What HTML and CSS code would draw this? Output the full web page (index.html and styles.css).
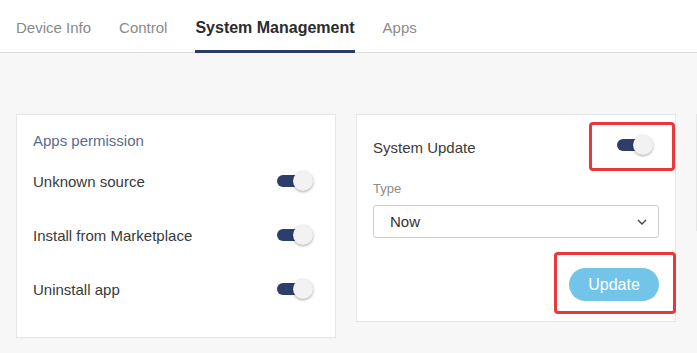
FILE: index.html
```html
<!DOCTYPE html>
<html lang="en">
<head>
    <meta charset="UTF-8">
    <meta name="viewport" content="width=device-width, initial-scale=1.0">
    <title>System Management</title>
    <link rel="stylesheet" href="styles.css">
</head>
<body>
    <!-- tabs -->
    <div class="tabs">
        <div class="tab">Device Info</div>
        <div class="tab">Control</div>
        <div class="tab active">System Management</div>
        <div class="tab">Apps</div>
    </div>

    <div class="main">
        <!-- apps permission -->
        <div class="card card-perm">
            <div class="card-title">Apps permission</div>
            <div class="row">
                <span>Unknown source</span>
                <div class="switch on"><span class="track"></span><span class="knob"></span></div>
            </div>
            <div class="row">
                <span>Install from Marketplace</span>
                <div class="switch on"><span class="track"></span><span class="knob"></span></div>
            </div>
            <div class="row">
                <span>Uninstall app</span>
                <div class="switch on"><span class="track"></span><span class="knob"></span></div>
            </div>
        </div>

        <!-- system update -->
        <div class="card card-update">
            <div class="update-head">
                <span>System Update</span>
                <div class="switch on switch-update"><span class="track"></span><span class="knob"></span></div>
            </div>
            <div class="field-label">Type</div>
            <div class="select">
                <span>Now</span>
                <svg class="chevron" viewBox="0 0 10 6" width="10" height="6">
                    <path d="M1 1l4 4 4-4" fill="none" stroke="#444" stroke-width="1.4"/>
                </svg>
            </div>
            <button class="btn-update">Update</button>

            <!-- annotations -->
            <div class="mark mark-switch"></div>
            <div class="mark mark-button"></div>
        </div>

        <div class="card card-next"></div>
    </div>
</body>
</html>
```

FILE: styles.css
```css
body {
    margin: 0;
    overflow: hidden;
    background: #f7f7f7;
    font-family: "Liberation Sans", Arial, sans-serif;
    color: #3a3a3a;
}

.tabs {
    display: flex;
    gap: 28px;
    height: 52px;
    padding-left: 16px;
    background: #fff;
    border-bottom: 1px solid #dcdcdc;
}

.tab {
    box-sizing: border-box;
    height: 53px;
    margin-bottom: -1px;
    padding-top: 19px;
    font-size: 15px;
    line-height: 18px;
    color: #8a8a8a;
    border-bottom: 3px solid transparent;
}

.tab.active {
    color: #2b2b2b;
    font-size: 16px;
    font-weight: bold;
    border-bottom-color: #2c3a66;
}

.main {
    display: flex;
    align-items: flex-start;
    gap: 20px;
    padding: 61px 0 0 16px;
    overflow: hidden;
}

.card {
    position: relative;
    flex: 0 0 320px;
    box-sizing: border-box;
    background: #fff;
    border: 1px solid #e6e6e6;
}

.card-perm {
    padding: 17px 22px 21px 16px;
}

.card-title {
    font-size: 15px;
    line-height: 18px;
    color: #5b6b8c;
    margin-bottom: 4px;
}

.row {
    display: flex;
    align-items: center;
    justify-content: space-between;
    height: 54px;
    font-size: 15px;
}

.switch {
    position: relative;
    width: 36px;
    height: 20px;
}

.switch .track {
    position: absolute;
    left: 0;
    top: 4px;
    width: 32px;
    height: 12px;
    border-radius: 6px;
    background: #2d3d6c;
}

.switch .knob {
    position: absolute;
    right: 0;
    top: 0;
    width: 20px;
    height: 20px;
    border-radius: 50%;
    background: #f2f2f2;
    box-shadow: 0 1px 3px rgba(0,0,0,0.35);
}

.card-update {
    display: flex;
    flex-direction: column;
    padding: 16px 16px 20px 16px;
}

.update-head {
    display: flex;
    align-items: center;
    justify-content: space-between;
    height: 32px;
    font-size: 15px;
}

.switch-update {
    margin-right: 6px;
    margin-bottom: 5px;
}

.field-label {
    margin-top: 18px;
    margin-bottom: 8px;
    font-size: 13px;
    line-height: 16px;
    color: #8c8c8c;
}

.select {
    display: flex;
    align-items: center;
    justify-content: space-between;
    box-sizing: border-box;
    height: 33px;
    padding: 0 11px 0 16px;
    border: 1px solid #cfcfcf;
    border-radius: 3px;
    font-size: 15px;
    color: #333;
}

.btn-update {
    align-self: flex-end;
    width: 90px;
    height: 33px;
    margin-top: 30px;
    border: none;
    border-radius: 17px;
    background: #72c5e8;
    color: #fff;
    font-family: inherit;
    font-size: 16px;
}

.mark {
    position: absolute;
    box-sizing: border-box;
    border: 3px solid #e8383d;
    border-radius: 4px;
}

.mark-switch {
    left: 232px;
    top: 7px;
    width: 86px;
    height: 49px;
}

.mark-button {
    left: 197px;
    top: 137px;
    width: 122px;
    height: 62px;
}

.card-next {
    height: 117px;
}
```
